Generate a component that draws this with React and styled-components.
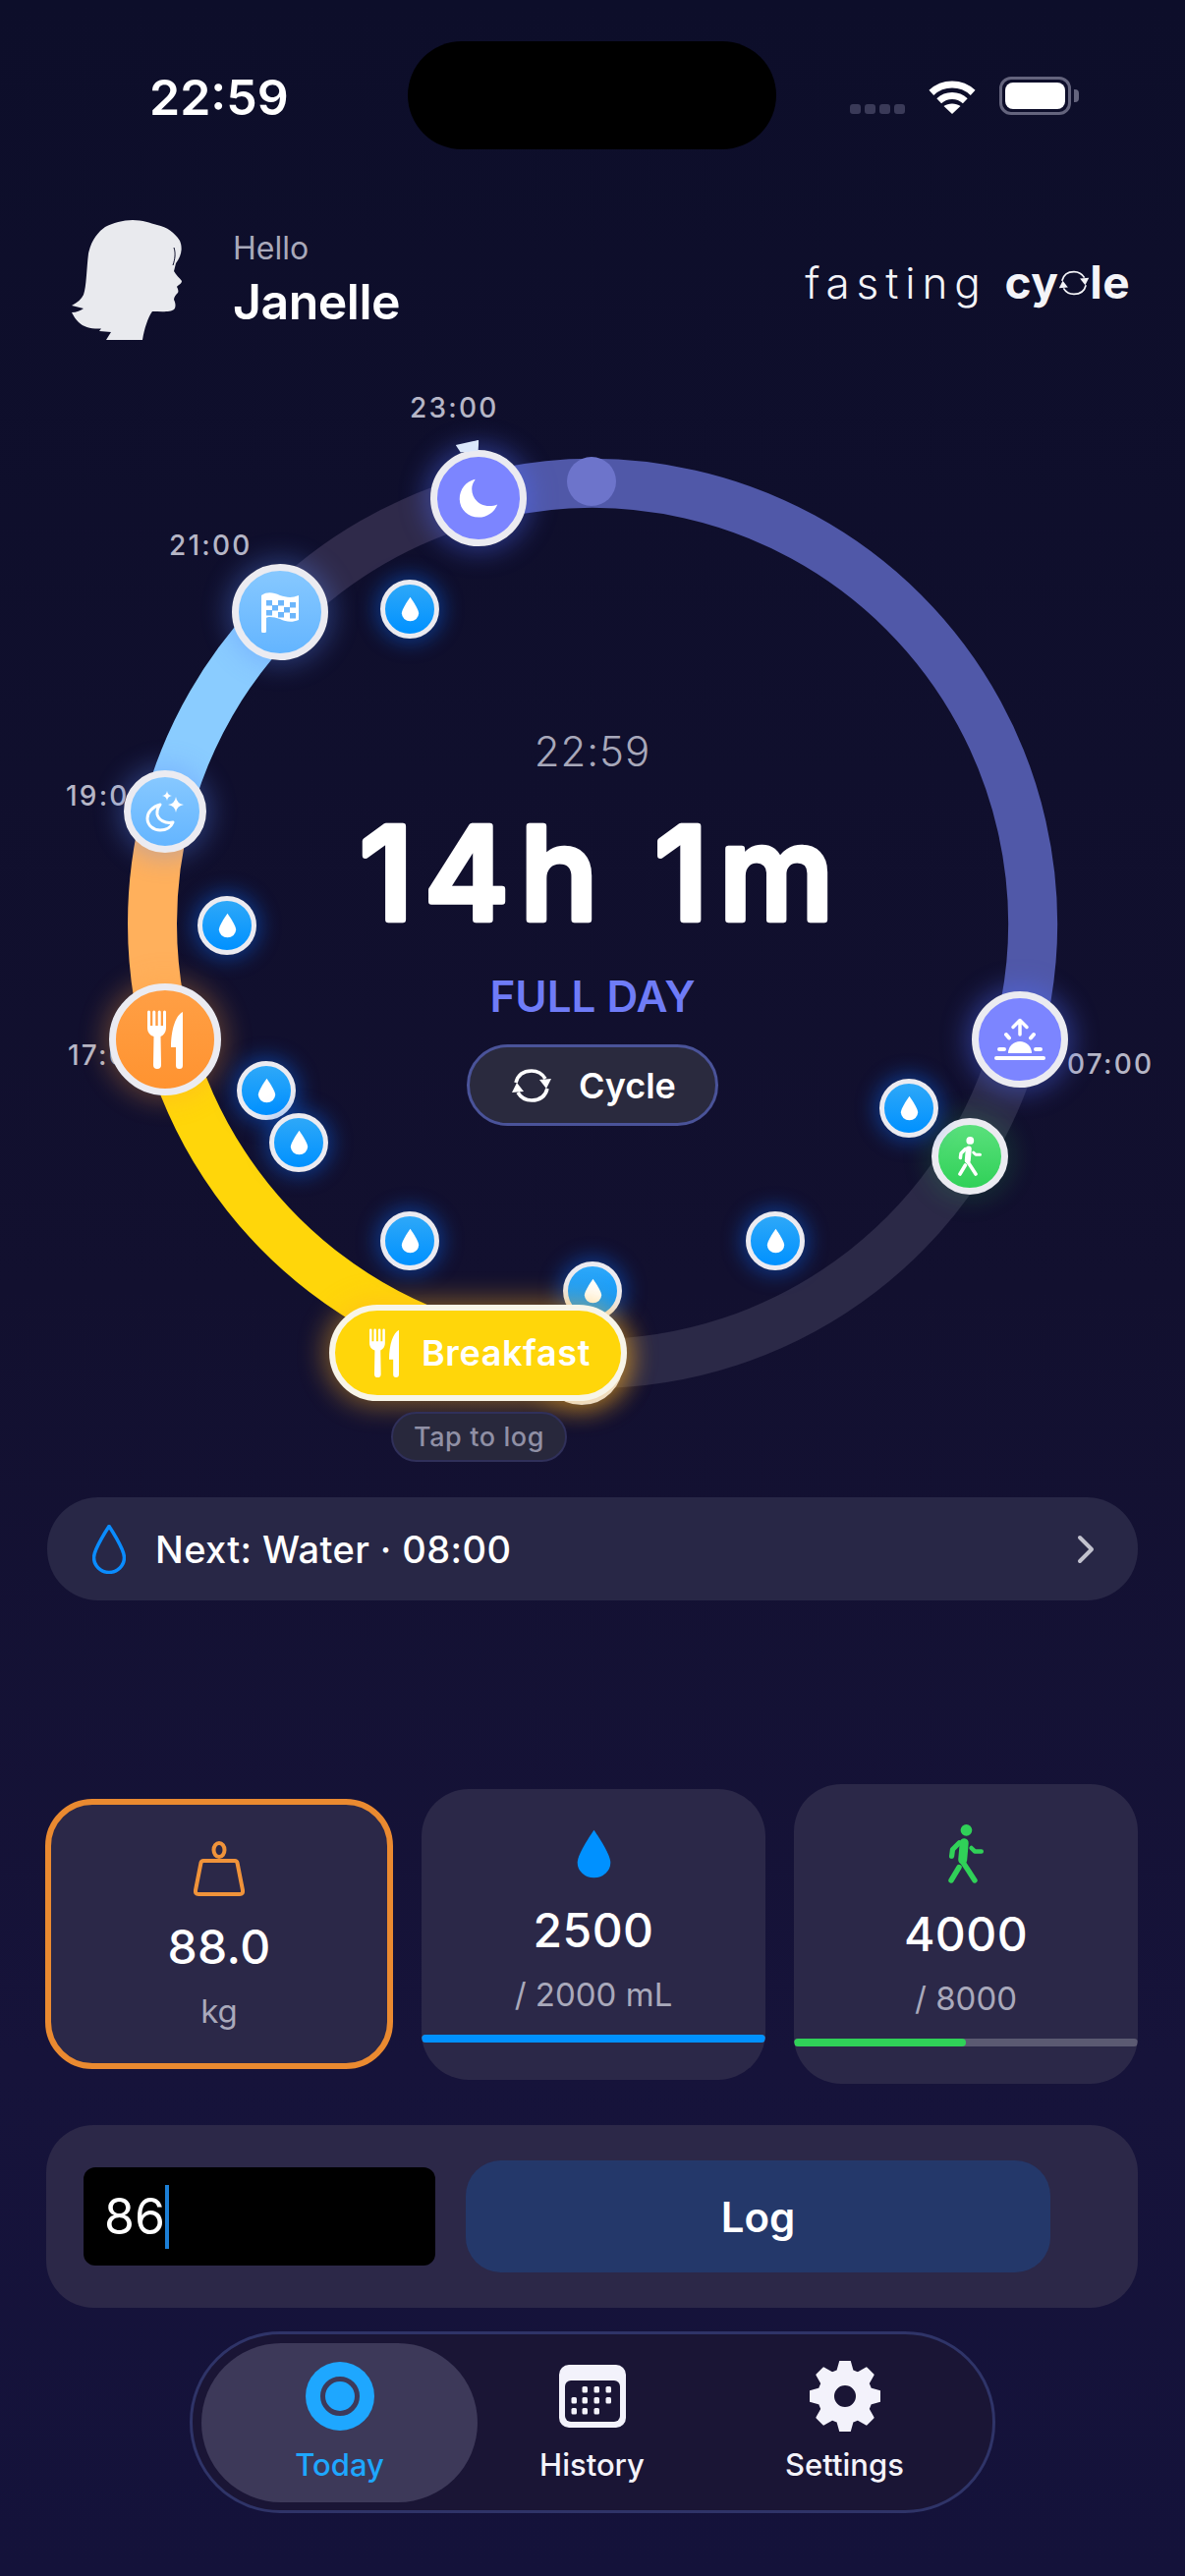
import React from "react";
import styled, { createGlobalStyle } from "styled-components";

const GlobalStyle = createGlobalStyle`
  html, body {
    margin: 0;
    padding: 0;
    width: 1206px;
    height: 2622px;
    overflow: hidden;
    background: #12112f;
  }
  * { box-sizing: border-box; }
`;

// ring maths: angle 0 = top, clockwise. one hour = 15deg
const CX = 603;
const CY = 560;
const R = 448;

function polar(cx, cy, r, deg) {
  const a = ((deg - 90) * Math.PI) / 180;
  return [cx + r * Math.cos(a), cy + r * Math.sin(a)];
}

function arc(cx, cy, r, from, to) {
  const [x0, y0] = polar(cx, cy, r, from);
  const [x1, y1] = polar(cx, cy, r, to);
  const large = to - from > 180 ? 1 : 0;
  return `M${x0} ${y0}A${r} ${r} 0 ${large} 1 ${x1} ${y1}`;
}

function gearPath(cx, cy, outer, root, hole, teeth) {
  const step = 360 / teeth;
  let d = "";
  for (let i = 0; i < teeth; i++) {
    const a = i * step;
    const pts = [
      polar(cx, cy, root, a - step * 0.36),
      polar(cx, cy, outer, a - step * 0.17),
      polar(cx, cy, outer, a + step * 0.17),
      polar(cx, cy, root, a + step * 0.36),
    ];
    pts.forEach((p, j) => {
      d += `${i === 0 && j === 0 ? "M" : "L"}${p[0].toFixed(2)} ${p[1].toFixed(2)}`;
    });
  }
  d += `Z M${cx - hole} ${cy}a${hole} ${hole} 0 1 0 ${hole * 2} 0a${hole} ${hole} 0 1 0 ${-hole * 2} 0Z`;
  return d;
}

const segments = [
  { from: 105, to: 180, color: "#2b2947" },
  { from: -45, to: -15, color: "#2f2a4a" },
  { from: -15, to: 105, color: "#5058a8" },
  { from: -75, to: -45, color: "#8accff" },
  { from: -105, to: -75, color: "#ffb05c" },
  { from: -180, to: -105, color: "#ffd60a" },
];

const waterSpots = [
  [417, 240],
  [231, 562],
  [271, 730],
  [304, 783],
  [417, 883],
  [603, 934],
  [925, 748],
  [789, 883],
];

const Page = styled.div`
  width: 1206px;
  height: 2622px;
  overflow: hidden;
  background: linear-gradient(180deg, #0d0e2a 0%, #12102f 50%, #16133a 80%, #14123a 100%);
  font-family: Inter, "Noto Sans", sans-serif;
  color: #fff;
  padding-top: 42px;
`;

const StatusBar = styled.div`
  display: grid;
  grid-template-columns: 415px 375px 1fr;
  height: 110px;
`;

const Clock = styled.div`
  padding: 32px 0 0 152px;
  font-size: 50px;
  line-height: 50px;
  font-weight: 600;
`;

const Island = styled.div`
  background: #000;
  border-radius: 55px;
`;

const StatusIcons = styled.div`
  display: flex;
  align-items: flex-end;
  padding: 0 0 35px 75px;
`;

const SignalDots = styled.div`
  display: flex;
  gap: 4px;
  margin-right: 23px;
  margin-bottom: 1px;
`;

const SignalDot = styled.span`
  width: 11px;
  height: 10px;
  border-radius: 3px;
  background: #3a3a58;
`;

const Battery = styled.div`
  position: relative;
  width: 73px;
  height: 39px;
  margin-left: 23px;
  border: 3px solid #64647d;
  border-radius: 12px;
  padding: 3px;
  &::after {
    content: "";
    position: absolute;
    right: -11px;
    top: 10px;
    width: 5px;
    height: 13px;
    border-radius: 0 4px 4px 0;
    background: #64647d;
  }
`;

const BatteryFill = styled.div`
  height: 100%;
  border-radius: 8px;
  background: #fff;
`;

const Header = styled.header`
  display: flex;
  align-items: center;
  height: 123px;
  margin-top: 72px;
  padding: 0 56px 0 73px;
`;

const Greeting = styled.div`
  display: flex;
  flex-direction: column;
  margin-left: 51px;
  flex: 1;
`;

const Hello = styled.div`
  font-size: 32px;
  line-height: 38px;
  color: #a9a9ba;
`;

const Name = styled.div`
  font-size: 50px;
  line-height: 60px;
  font-weight: 600;
  letter-spacing: -0.5px;
  margin-top: 5px;
`;

const Logo = styled.div`
  display: flex;
  align-items: baseline;
  margin-top: 4px;
  font-size: 44px;
  line-height: 56px;
  font-weight: 300;
  letter-spacing: 6.9px;
  color: #f4f4f8;
`;

const LogoBold = styled.span`
  display: inline-flex;
  align-items: baseline;
  margin-left: 18px;
  font-size: 46px;
  font-weight: 700;
  letter-spacing: 0.4px;
`;

const RingCanvas = styled.section`
  position: relative;
  width: 1206px;
  height: 1120px;
  margin-top: 33px;
`;

const RingSvg = styled.svg`
  position: absolute;
  inset: 0;
`;

const HourLabel = styled.span`
  position: absolute;
  left: ${(p) => p.$x}px;
  top: ${(p) => p.$y}px;
  font-size: 28px;
  line-height: 34px;
  font-weight: 500;
  letter-spacing: 2.2px;
  color: #b6b6c6;
  white-space: nowrap;
`;

const Node = styled.div`
  position: absolute;
  left: ${(p) => p.$x - p.$size / 2}px;
  top: ${(p) => p.$y - p.$size / 2}px;
  width: ${(p) => p.$size}px;
  height: ${(p) => p.$size}px;
  display: flex;
  align-items: center;
  justify-content: center;
  border-radius: 50%;
  border: ${(p) => (p.$size < 70 ? 5 : 7)}px solid #ebebf1;
  background: linear-gradient(180deg, ${(p) => p.$from}, ${(p) => p.$to});
  box-shadow: 0 0 ${(p) => (p.$size < 70 ? 20 : 26)}px ${(p) => (p.$size < 70 ? 5 : 6)}px ${(p) => p.$glow};
`;

const ClockNub = styled.span`
  position: absolute;
  left: 19px;
  top: -16px;
  width: 24px;
  height: 11px;
  background: #dbe8fb;
  clip-path: polygon(0 25%, 100% 0, 92% 100%, 18% 100%);
  transform: rotate(-6deg);
`;

const Readout = styled.div`
  position: absolute;
  left: 0;
  right: 0;
  top: 360px;
  display: flex;
  flex-direction: column;
  align-items: center;
`;

const NowTime = styled.div`
  font-size: 42px;
  line-height: 50px;
  font-weight: 300;
  letter-spacing: 1px;
  color: #a8a8ba;
`;

const DurationSvg = styled.svg`
  display: block;
  margin-top: 13px;
`;

const DurationText = styled.text`
  font-family: Inter, "Noto Sans", sans-serif;
  font-size: 131px;
  font-weight: 500;
  letter-spacing: 11.5px;
  fill: #fff;
  stroke: #fff;
  stroke-width: 6.5px;
  stroke-linejoin: round;
  text-anchor: middle;
`;

const DayKind = styled.div`
  margin-top: 14px;
  font-size: 44px;
  line-height: 54px;
  font-weight: 600;
  color: #6f7cf7;
`;

const CycleButton = styled.div`
  display: flex;
  align-items: center;
  gap: 27px;
  width: 256px;
  height: 83px;
  margin-top: 22px;
  padding-left: 42px;
  border: 3px solid #4a5399;
  border-radius: 42px;
  background: #2a2a3e;
  font-size: 36px;
  font-weight: 600;
`;

const MealPill = styled.div`
  position: absolute;
  left: 335px;
  top: 948px;
  width: 303px;
  height: 98px;
  display: flex;
  align-items: center;
  gap: 23px;
  padding-left: 35px;
  border: 6px solid #f8f5e8;
  border-radius: 49px;
  background: #ffd60a;
  box-shadow: 0 0 26px 6px rgba(255, 176, 30, 0.42);
  font-size: 36px;
  font-weight: 600;
  letter-spacing: 0.6px;
`;

const TapHint = styled.div`
  position: absolute;
  left: 398px;
  top: 1057px;
  width: 179px;
  height: 51px;
  display: flex;
  align-items: center;
  justify-content: center;
  border: 2px solid #30305a;
  border-radius: 26px;
  background: #28283c;
  font-size: 27px;
  font-weight: 500;
  letter-spacing: 0.6px;
  color: #9090a5;
`;

const NextBar = styled.div`
  display: flex;
  align-items: center;
  height: 105px;
  margin: 24px 48px 0;
  padding: 0 44px 0 46px;
  border-radius: 52px;
  background: #282746;
`;

const NextText = styled.span`
  flex: 1;
  margin-left: 30px;
  font-size: 38px;
  font-weight: 500;
  letter-spacing: 0.4px;
`;

const Cards = styled.div`
  display: grid;
  grid-template-columns: 354px 350px 350px;
  column-gap: 29px;
  align-items: center;
  height: 305px;
  margin: 187px 48px 0 46px;
`;

const Card = styled.div`
  display: flex;
  flex-direction: column;
  align-items: center;
  height: ${(p) => p.$h}px;
  padding-top: ${(p) => p.$top}px;
  border-radius: 48px;
  background: #2b2848;
  border: ${(p) => (p.$active ? "6px solid #ea8a30" : "none")};
  overflow: hidden;
`;

const CardValue = styled.div`
  margin-top: 24px;
  font-size: 48px;
  line-height: 56px;
  font-weight: 500;
  letter-spacing: 0.4px;
`;

const CardSub = styled.div`
  margin-top: 17px;
  font-size: 33px;
  line-height: 40px;
  color: #a9a9bb;
`;

const Progress = styled.div`
  align-self: stretch;
  height: 8px;
  margin-top: 21px;
  border-radius: 4px;
  background: #5b5a72;
  overflow: hidden;
`;

const ProgressFill = styled.div`
  height: 100%;
  border-radius: 4px;
  background: ${(p) => p.$color};
`;

const LogPanel = styled.div`
  display: flex;
  align-items: center;
  height: 186px;
  margin: 42px 48px 0 47px;
  padding-left: 38px;
  border-radius: 48px;
  background: #2c2848;
`;

const ValueInput = styled.div`
  display: flex;
  align-items: center;
  width: 358px;
  height: 100px;
  padding-left: 21px;
  border-radius: 12px;
  background: #000;
  font-size: 50px;
  font-weight: 400;
`;

const Caret = styled.span`
  width: 4px;
  height: 65px;
  background: #1c7fd6;
`;

const LogButton = styled.div`
  display: flex;
  align-items: center;
  justify-content: center;
  width: 595px;
  height: 114px;
  margin-left: 31px;
  border-radius: 36px;
  background: #24386a;
  font-size: 42px;
  font-weight: 600;
`;

const TabBar = styled.nav`
  display: grid;
  grid-template-columns: 281px 233px 1fr;
  align-items: center;
  width: 820px;
  height: 185px;
  margin: 24px 0 0 193px;
  padding: 0 10px 0 9px;
  border: 3px solid #2f3468;
  border-radius: 92px;
  background: #1a1535;
`;

const Tab = styled.div`
  display: flex;
  flex-direction: column;
  align-items: center;
  justify-content: center;
  gap: 15px;
  height: 162px;
  border-radius: 81px;
  background: ${(p) => (p.$active ? "#3d3959" : "transparent")};
  color: ${(p) => (p.$active ? "#1ea7ff" : "#f4f3fa")};
  font-size: 31px;
  line-height: 38px;
  font-weight: 500;
`;

const TabIcon = styled.div`
  display: flex;
  align-items: center;
  justify-content: center;
  height: 72px;
`;

function Drop({ width = 20, height = 26, fill = "#fff", stroke, strokeWidth = 0 }) {
  return (
    <svg width={width} height={height} viewBox="1 0.5 22 31.500" preserveAspectRatio="none">
      <path
        d="M12 1.500C12 1.500 2 16 2 21.500a10 9.500 0 0 0 20 0C22 16 12 1.500 12 1.500z"
        fill={fill}
        stroke={stroke}
        strokeWidth={strokeWidth}
        vectorEffect="non-scaling-stroke"
      />
    </svg>
  );
}

function ForkKnife({ width, height }) {
  return (
    <svg width={width} height={height} viewBox="0 0 36 60" fill="#fff">
      <path d="M0 2a1.500 1.500 0 0 1 3 0V16H5.300V2a1.500 1.500 0 0 1 3 0V16H10.700V2a1.500 1.500 0 0 1 3 0V16H16V2a1.500 1.500 0 0 1 3 0V18C19 23 16 26 13.500 27L14 56a4 4 0 0 1-8 0L6.500 27C3 26 0 23 0 18Z" />
      <path d="M36 2V56.500a3.500 3.500 0 0 1-7 0V38H24C24 20 29 5 36 2Z" />
    </svg>
  );
}

function Moon() {
  return (
    <svg width="44" height="44" viewBox="0 0 24 24" fill="#fff">
      <path d="M10 1.500C5 2.800 1.500 7.200 1.500 12.400c0 5.900 4.700 10.300 10.600 10.300 4.600 0 8.700-2.900 10.400-7.200-1.400.6-2.900.9-4.500.9-5.500 0-9.700-4.100-9.700-9.500 0-1.800.6-3.500 1.700-4.900z" />
    </svg>
  );
}

function MoonStars() {
  return (
    <svg width="40" height="42" viewBox="0 0 40 42" fill="#fff">
      <path
        d="M15 14C7 16 2 22 2 28C2 35 8 40 15 40C21 40 26 37 28 32C20 34 13 29 12 24C11.500 20 12.500 17 15 14Z"
        fill="none"
        stroke="#fff"
        strokeWidth="3"
        strokeLinejoin="round"
      />
      <path d="M31 6Q32 13 39 14Q32 15 31 22Q30 15 23 14Q30 13 31 6Z" />
      <path d="M22 0Q22.600 4.400 27 5Q22.600 5.600 22 10Q21.400 5.600 17 5Q21.400 4.400 22 0Z" />
    </svg>
  );
}

const flagCells = [
  [5, 8], [17, 8], [29, 10],
  [11, 13], [23, 15],
  [5, 18], [17, 20], [29, 21],
];

function CheckerFlag() {
  return (
    <svg width="38" height="41" viewBox="0 0 38 41">
      <path
        d="M0 3C6-1 12 0 19 3C25 5 31 6 38 3V28C31 31 25 30 19 27C13 25 7 24 5 26V39a2.500 2.500 0 0 1-5 0Z"
        fill="#fff"
      />
      {flagCells.map(([x, y]) => (
        <rect key={`${x}-${y}`} x={x} y={y} width="6" height="5.500" fill="#6cb6fb" />
      ))}
    </svg>
  );
}

function Sunrise() {
  return (
    <svg width="52" height="44" viewBox="0 0 52 44" fill="none" stroke="#fff" strokeLinecap="round" strokeLinejoin="round">
      <path d="M26 17V3M19 9.500L26 2.500L33 9.500" strokeWidth="3.500" />
      <path d="M14 36a12 12 0 0 1 24 0Z" fill="#fff" stroke="none" />
      <path d="M12 17L15 20.500M40 17L37 20.500M5 32H10M42 32H47" strokeWidth="4" />
      <path d="M2 41H50" strokeWidth="4" />
    </svg>
  );
}

function Walker({ width, height, color = "#fff" }) {
  return (
    <svg width={width} height={height} viewBox="0 0 24 40" fill="none" stroke={color} strokeLinecap="round" strokeLinejoin="round">
      <circle cx="12.300" cy="3.900" r="3.900" fill={color} stroke="none" />
      <path d="M10.800 12.500L9.800 24" strokeWidth="6" />
      <path d="M7.500 12.500L3 17L2.400 21.500" strokeWidth="3.500" />
      <path d="M15.700 16L18 18.300H22.500" strokeWidth="3" />
      <path d="M9.500 25L13.500 31L18 38" strokeWidth="3.600" />
      <path d="M7.400 29L2 38" strokeWidth="3.600" />
    </svg>
  );
}

function CycleArrows({ size = 42, color = "#fff", strokeWidth = 2.400 }) {
  return (
    <svg width={size} height={size} viewBox="0 0 42 42" fill="none">
      <path d="M5 18C7 10 13 6 21 6C27 6 32 9 35 14" stroke={color} strokeWidth={strokeWidth * 1.500} />
      <path d="M37 24C35 32 29 36 21 36C15 36 10 33 7 28" stroke={color} strokeWidth={strokeWidth * 1.500} />
      <path d="M29 15L41 14L36 24Z" fill={color} />
      <path d="M13 27L1 28L6 18Z" fill={color} />
    </svg>
  );
}

function Silhouette() {
  return (
    <svg width="113" height="123" viewBox="0 0 113 123" fill="#e9eaee">
      <path d="M62 0C72 0 80 3 87 5C97 7 105 13 110 21C113 28 112 36 106 44L104 52C106 56 110 59 112 62C112 65 108 66 107 68C108 70 109 72 108 74C106 76 104 78 104 81C106 85 106 89 104 91C101 94 90 93 82 93C78 98 74 110 72 122H35L40 114L28 113L30 110.500C20 111 12 109 7 104C4 101 2 98 0 94C5 94 9 92 12 90C8 89 4 88 0 87C6 84 10 80 12 76C15 68 15 50 17 34C20 20 27 12 34 7C42 3 52 0 62 0Z" />
      <path d="M104 28C106 34 105 40 103 46" fill="none" stroke="#0d0e2a" strokeWidth="1" />
    </svg>
  );
}

function Wifi() {
  return (
    <svg width="50" height="38" viewBox="0 0 50 38" fill="none" stroke="#fff" strokeWidth="7">
      <path d={arc(25, 38, 31, -43, 43)} />
      <path d={arc(25, 38, 19.500, -43, 43)} />
      <path d="M25 37L16.500 29C21 25.500 29 25.500 33.500 29Z" fill="#fff" stroke="none" />
    </svg>
  );
}

function WeightIcon() {
  return (
    <svg width="52" height="56" viewBox="0 0 52 56" fill="none" stroke="#f0933a" strokeWidth="4" strokeLinejoin="round">
      <ellipse cx="26" cy="9" rx="5.500" ry="7" />
      <path d="M10 20H42Q44 20 44.500 22L50 50Q50.500 54 47 54H5Q1.500 54 2 50L7.500 22Q8 20 10 20Z" />
    </svg>
  );
}

function TodayIcon() {
  return (
    <svg width="70" height="70" viewBox="0 0 70 70">
      <circle cx="35" cy="35" r="35" fill="#1ea7ff" />
      <circle cx="35" cy="35" r="17.500" fill="none" stroke="#3d3959" strokeWidth="5" />
      <circle cx="35" cy="35" r="12.500" fill="#1ea7ff" />
    </svg>
  );
}

const calendarDots = [
  [26, 25], [38, 25], [50, 25],
  [15, 36], [26, 36], [38, 36], [50, 36],
  [15, 47], [26, 47], [38, 47],
];

function CalendarIcon() {
  return (
    <svg width="68" height="64" viewBox="0 0 68 64">
      <rect width="68" height="64" rx="10" fill="#f3f2fb" />
      <rect x="6" y="16" width="56" height="42" rx="6" fill="#1a1535" />
      {calendarDots.map(([x, y]) => (
        <rect key={`${x}-${y}`} x={x - 2.500} y={y - 3} width="5.500" height="6.500" rx="1.500" fill="#f3f2fb" />
      ))}
    </svg>
  );
}

function GearIcon() {
  return (
    <svg width="72" height="72" viewBox="0 0 72 72">
      <path d={gearPath(36, 36, 36, 27, 12, 8)} fill="#f3f2fb" fillRule="evenodd" strokeLinejoin="round" stroke="#f3f2fb" strokeWidth="2" />
    </svg>
  );
}

function App() {
  return (
    <Page>
      <GlobalStyle />
      <StatusBar>
        <Clock>22:59</Clock>
        <Island />
        <StatusIcons>
          <SignalDots>
            <SignalDot />
            <SignalDot />
            <SignalDot />
            <SignalDot />
          </SignalDots>
          <Wifi />
          <Battery>
            <BatteryFill />
          </Battery>
        </StatusIcons>
      </StatusBar>

      <Header>
        <Silhouette />
        <Greeting>
          <Hello>Hello</Hello>
          <Name>Janelle</Name>
        </Greeting>
        <Logo>
          fasting
          <LogoBold>
            cy
            <CycleArrows size={32} color="#f4f4f8" strokeWidth={1.500} />
            le
          </LogoBold>
        </Logo>
      </Header>

      <RingCanvas>
        <RingSvg width="1206" height="1120" viewBox="0 0 1206 1120" fill="none">
          {segments.map((s) => (
            <path key={s.from} d={arc(CX, CY, R, s.from, s.to)} stroke={s.color} strokeWidth="50" />
          ))}
          <circle cx="602" cy="110" r="25" fill="#6d74cb" />
        </RingSvg>

        <HourLabel $x={417} $y={18}>23:00</HourLabel>
        <HourLabel $x={172} $y={158}>21:00</HourLabel>
        <HourLabel $x={67} $y={413}>19:00</HourLabel>
        <HourLabel $x={69} $y={677}>17:00</HourLabel>
        <HourLabel $x={1086} $y={686}>07:00</HourLabel>

        <Node $x={487} $y={127} $size={98} $from="#7c85ff" $to="#7c85ff" $glow="rgba(80, 110, 255, 0.4)">
          <ClockNub />
          <Moon />
        </Node>
        <Node $x={285} $y={243} $size={98} $from="#86c8ff" $to="#64b5ff" $glow="rgba(90, 140, 255, 0.32)">
          <CheckerFlag />
        </Node>
        <Node $x={168} $y={446} $size={84} $from="#86c8ff" $to="#64b5ff" $glow="rgba(90, 140, 255, 0.32)">
          <MoonStars />
        </Node>
        <Node $x={168} $y={678} $size={114} $from="#ff9f45" $to="#ff9330" $glow="rgba(255, 160, 60, 0.3)">
          <ForkKnife width={36} height={60} />
        </Node>
        <Node $x={1038} $y={678} $size={98} $from="#7c85ff" $to="#7c85ff" $glow="rgba(80, 110, 255, 0.4)">
          <Sunrise />
        </Node>
        <Node $x={987} $y={797} $size={78} $from="#5ae07c" $to="#30d158" $glow="rgba(48, 209, 88, 0.16)">
          <Walker width={24} height={40} />
        </Node>
        {waterSpots.map(([x, y]) => (
          <Node key={`${x}-${y}`} $x={x} $y={y} $size={60} $from="#2ea8f8" $to="#0091ff" $glow="rgba(10, 110, 255, 0.4)">
            <Drop width={19} height={26} />
          </Node>
        ))}
        <Node $x={592} $y={1008} $size={84} $from="#ffd60a" $to="#ffd60a" $glow="rgba(255, 176, 30, 0.4)" />

        <Readout>
          <NowTime>22:59</NowTime>
          <DurationSvg width="600" height="170" viewBox="0 0 600 170">
            <DurationText x="310" y="133">14h 1m</DurationText>
          </DurationSvg>
          <DayKind>FULL DAY</DayKind>
          <CycleButton>
            <CycleArrows size={42} />
            Cycle
          </CycleButton>
        </Readout>

        <MealPill>
          <ForkKnife width={30} height={50} />
          Breakfast
        </MealPill>
        <TapHint>Tap to log</TapHint>
      </RingCanvas>

      <NextBar>
        <Drop width={34} height={50} fill="none" stroke="#0a8cff" strokeWidth={3.500} />
        <NextText>Next: Water · 08:00</NextText>
        <svg width="18" height="30" viewBox="0 0 18 30" fill="none" stroke="#c2c2ce" strokeWidth="4" strokeLinecap="round" strokeLinejoin="round">
          <path d="M3 3L15 15L3 27" />
        </svg>
      </NextBar>

      <Cards>
        <Card $active $h={275} $top={37}>
          <WeightIcon />
          <CardValue>88.0</CardValue>
          <CardSub>kg</CardSub>
        </Card>
        <Card $h={296} $top={40}>
          <Drop width={37} height={52} fill="#0091ff" />
          <CardValue>2500</CardValue>
          <CardSub>/ 2000 mL</CardSub>
          <Progress>
            <ProgressFill $color="#0091ff" style={{ width: "100%" }} />
          </Progress>
        </Card>
        <Card $h={305} $top={41}>
          <Walker width={36} height={60} color="#30d158" />
          <CardValue>4000</CardValue>
          <CardSub>/ 8000</CardSub>
          <Progress>
            <ProgressFill $color="#30d158" style={{ width: "50%" }} />
          </Progress>
        </Card>
      </Cards>

      <LogPanel>
        <ValueInput>
          86
          <Caret />
        </ValueInput>
        <LogButton>Log</LogButton>
      </LogPanel>

      <TabBar>
        <Tab $active>
          <TabIcon>
            <TodayIcon />
          </TabIcon>
          Today
        </Tab>
        <Tab>
          <TabIcon>
            <CalendarIcon />
          </TabIcon>
          History
        </Tab>
        <Tab>
          <TabIcon>
            <GearIcon />
          </TabIcon>
          Settings
        </Tab>
      </TabBar>
    </Page>
  );
}

export default App;
